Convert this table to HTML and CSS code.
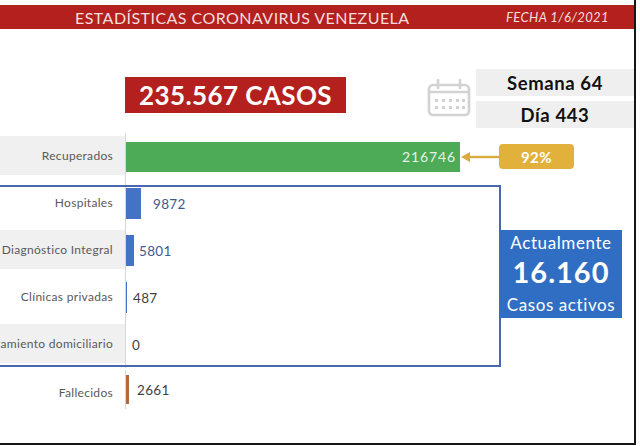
FILE: index.html
```html
<!DOCTYPE html>
<html lang="es">
<head>
<meta charset="utf-8">
<link rel="stylesheet" href="styles.css">
</head>
<body>
<div class="page">
  <header class="header">
    <div class="title">ESTADÍSTICAS CORONAVIRUS VENEZUELA</div>
    <div class="date">FECHA 1/6/2021</div>
  </header>

  <section class="top">
    <div class="total">235.567 CASOS</div>
    <div class="when">
      <svg class="cal" width="44" height="38" viewBox="0 0 44 38">
        <rect x="2" y="6" width="40" height="30" rx="4" fill="none" stroke="#d2d2d2" stroke-width="2.6"/>
        <line x1="2" y1="13" x2="42" y2="13" stroke="#d2d2d2" stroke-width="2.6"/>
        <line x1="11" y1="1" x2="11" y2="9" stroke="#d2d2d2" stroke-width="2.6" stroke-linecap="round"/>
        <line x1="33" y1="1" x2="33" y2="9" stroke="#d2d2d2" stroke-width="2.6" stroke-linecap="round"/>
        <g fill="#d2d2d2">
          <rect x="8" y="20" width="3" height="3"/><rect x="15" y="20" width="3" height="3"/><rect x="22" y="20" width="3" height="3"/><rect x="29" y="20" width="3" height="3"/><rect x="35" y="20" width="3" height="3"/>
          <rect x="8" y="27" width="3" height="3"/><rect x="15" y="27" width="3" height="3"/><rect x="22" y="27" width="3" height="3"/><rect x="29" y="27" width="3" height="3"/><rect x="35" y="27" width="3" height="3"/>
        </g>
      </svg>
      <div class="days">
        <div class="day-box">Semana 64</div>
        <div class="day-box">Día 443</div>
      </div>
    </div>
  </section>

  <section class="chart">
    <div class="row">
      <div class="label band">Recuperados</div>
      <div class="plot">
        <div class="bar green" style="width:334px"><span class="inval">216746</span></div>
        <svg class="arrow" width="38" height="12" viewBox="0 0 38 12">
          <line x1="6" y1="6" x2="38" y2="6" stroke="#d9ab3a" stroke-width="2.4"/>
          <polygon points="0,6 9,1 9,11" fill="#d9ab3a"/>
        </svg>
        <div class="pct">92%</div>
      </div>
    </div>

    <div class="group">
      <div class="row">
        <div class="label">Hospitales</div>
        <div class="plot">
          <div class="bar blue" style="width:15px"></div>
          <span class="val val-blue gap12">9872</span>
        </div>
      </div>
      <div class="row">
        <div class="label band">Centro de Diagnóstico Integral</div>
        <div class="plot">
          <div class="bar blue" style="width:8px"></div>
          <span class="val val-blue gap5">5801</span>
        </div>
      </div>
      <div class="row">
        <div class="label">Clínicas privadas</div>
        <div class="plot">
          <div class="bar blue" style="width:1px"></div>
          <span class="val gap6">487</span>
        </div>
      </div>
      <div class="row">
        <div class="label band">Aislamiento domiciliario</div>
        <div class="plot">
          <span class="val gap6">0</span>
        </div>
      </div>
      <div class="active">
        <div class="active-top">Actualmente</div>
        <div class="active-num">16.160</div>
        <div class="active-bot">Casos activos</div>
      </div>
    </div>

    <div class="row last">
      <div class="label">Fallecidos</div>
      <div class="plot">
        <div class="bar brown" style="width:3px"></div>
        <span class="val gap8">2661</span>
      </div>
    </div>
  </section>
</div>
</body>
</html>
```

FILE: styles.css
```css
html, body {
  margin: 0;
  padding: 0;
  background: #ffffff;
}

body {
  font-family: Lato, "Open Sans", "Liberation Sans", sans-serif;
}

.page {
  box-sizing: border-box;
  width: 636px;
  height: 445px;
  border-right: 2px solid #151515;
  border-bottom: 2px solid #151515;
  overflow: hidden;
  position: relative;
}

.header {
  margin-top: 5px;
  height: 24px;
  background: #b3201d;
  display: flex;
  align-items: center;
  color: #f6dede;
}

.title {
  margin-left: 75px;
  font-size: 16px;
  letter-spacing: 0.45px;
}

.date {
  margin-left: auto;
  margin-right: 25px;
  font-size: 13px;
  letter-spacing: 0.4px;
  font-style: italic;
}

.top {
  display: flex;
  align-items: flex-start;
  height: 104px;
}

.total {
  margin-top: 48px;
  margin-left: 125px;
  width: 221px;
  height: 36px;
  background: #b3201d;
  color: #ffffff;
  font-weight: 700;
  font-size: 26px;
  display: flex;
  align-items: center;
  justify-content: center;
  letter-spacing: 0.4px;
}

.when {
  margin-top: 40px;
  margin-left: 81px;
  display: flex;
  align-items: flex-start;
}

.cal {
  margin-top: 10px;
  display: block;
}

.days {
  margin-left: 5px;
  display: flex;
  flex-direction: column;
  gap: 5px;
}

.day-box {
  width: 158px;
  height: 27px;
  background: #efefef;
  color: #111111;
  font-weight: 700;
  font-size: 18.5px;
  letter-spacing: 0.6px;
  display: flex;
  align-items: center;
  justify-content: center;
}

.chart {
  display: flex;
  flex-direction: column;
}

.row {
  height: 47px;
  display: flex;
  align-items: stretch;
}

.label {
  box-sizing: border-box;
  width: 125px;
  flex: none;
  margin: 3px 0 5px;
  padding-right: 12px;
  display: flex;
  align-items: center;
  justify-content: flex-end;
  white-space: nowrap;
  font-size: 12px;
  letter-spacing: 0.3px;
  color: #595959;
}

.band {
  background: #f0f0f0;
}

.plot {
  flex: 1;
  border-left: 1px solid #d6d6d6;
  display: flex;
  align-items: center;
}

.row.last {
  margin-top: 2px;
}

.row.last .plot {
  margin-bottom: 8px;
}

.bar {
  height: 31px;
  flex: none;
}

.green {
  background: #4daa57;
  height: 30px;
  display: flex;
  align-items: center;
  justify-content: flex-end;
}

.inval {
  color: #e4f3e4;
  font-size: 14px;
  letter-spacing: 0.9px;
  padding-right: 4px;
}

.arrow {
  display: block;
  margin-left: 1px;
  margin-top: 1px;
}

.pct {
  width: 75px;
  height: 25px;
  border-radius: 4px;
  background: #e1b13c;
  color: #ffffff;
  font-weight: 700;
  font-size: 15px;
  letter-spacing: 0.5px;
  display: flex;
  align-items: center;
  justify-content: center;
}

.blue {
  background: #4472c4;
}

.brown {
  background: #b26a3d;
  height: 29px;
}

.val {
  font-size: 13.5px;
  letter-spacing: 0.3px;
  color: #3f3f3f;
}

.val-blue {
  color: #415a8e;
}

.gap12 { margin-left: 12px; }
.gap8 { margin-left: 8px; }
.gap6 { margin-left: 6px; }
.gap5 { margin-left: 5px; }

.group {
  position: relative;
  width: 500px;
}

.group::after {
  content: "";
  position: absolute;
  left: -3px;
  right: -1px;
  top: 5px;
  bottom: 1px;
  border: 2px solid #4a67ae;
  pointer-events: none;
}

.active {
  position: absolute;
  left: 500px;
  top: 50px;
  width: 122px;
  height: 88px;
  background: #2f6ec2;
  color: #ffffff;
  z-index: 1;
  display: flex;
  flex-direction: column;
  align-items: center;
}

.active-top {
  margin-top: 2px;
  font-size: 17px;
  letter-spacing: 0.6px;
  line-height: 22px;
}

.active-num {
  font-size: 29px;
  font-weight: 700;
  letter-spacing: 1px;
  line-height: 36px;
}

.active-bot {
  font-size: 17px;
  letter-spacing: 0.6px;
  line-height: 22px;
  margin-top: 4px;
}
```
